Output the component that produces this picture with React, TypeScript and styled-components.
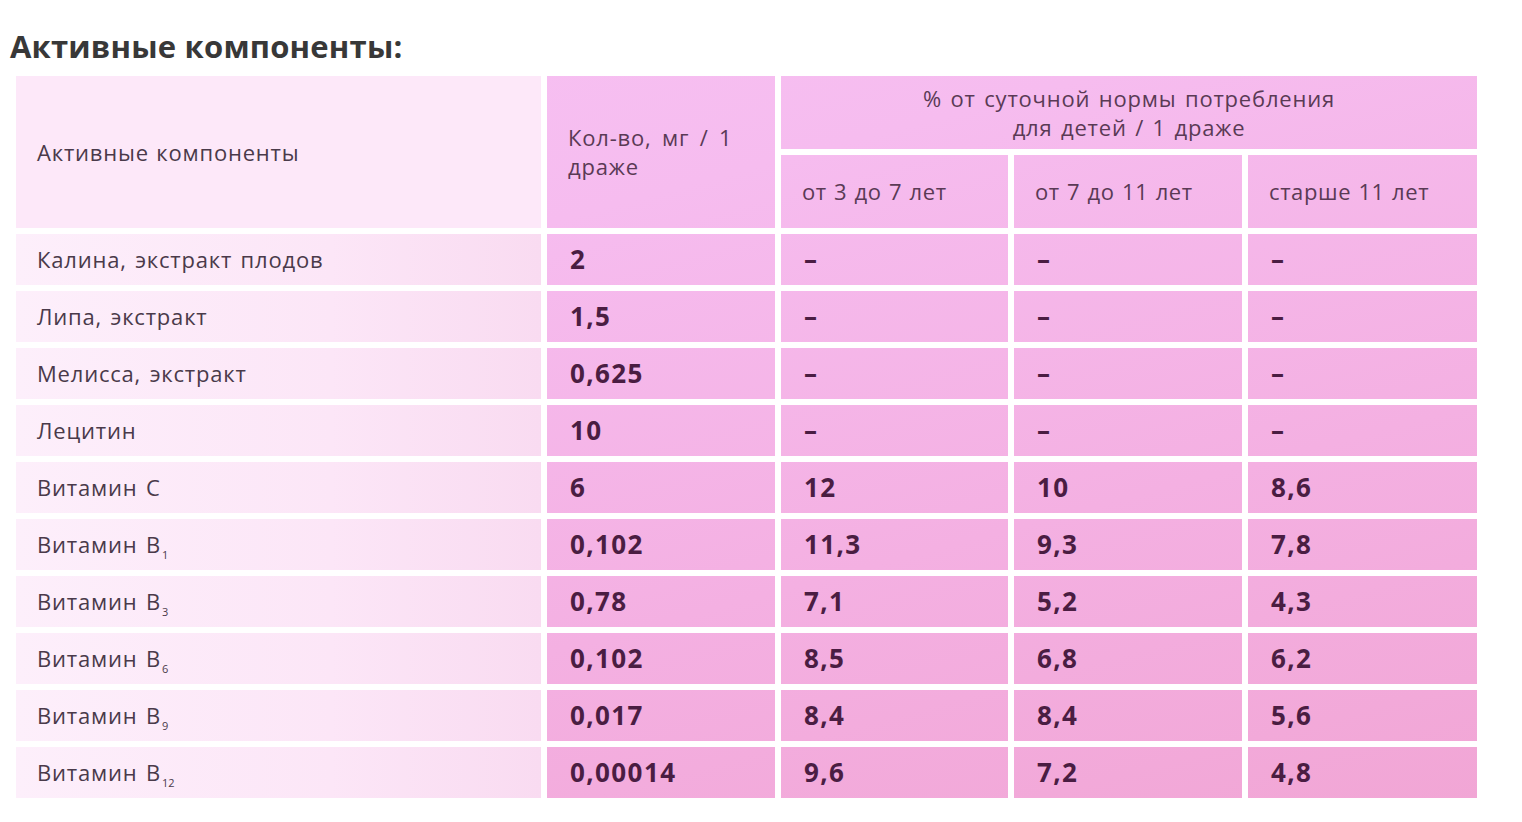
import React from 'react';
import styled, { createGlobalStyle } from 'styled-components';

type Row = {
  name: string;
  sub?: string;
  amount: string;
  values: [string, string, string];
};

const rows: Row[] = [
  { name: 'Калина, экстракт плодов', amount: '2', values: ['–', '–', '–'] },
  { name: 'Липа, экстракт', amount: '1,5', values: ['–', '–', '–'] },
  { name: 'Мелисса, экстракт', amount: '0,625', values: ['–', '–', '–'] },
  { name: 'Лецитин', amount: '10', values: ['–', '–', '–'] },
  { name: 'Витамин C', amount: '6', values: ['12', '10', '8,6'] },
  { name: 'Витамин B', sub: '1', amount: '0,102', values: ['11,3', '9,3', '7,8'] },
  { name: 'Витамин B', sub: '3', amount: '0,78', values: ['7,1', '5,2', '4,3'] },
  { name: 'Витамин B', sub: '6', amount: '0,102', values: ['8,5', '6,8', '6,2'] },
  { name: 'Витамин B', sub: '9', amount: '0,017', values: ['8,4', '8,4', '5,6'] },
  { name: 'Витамин B', sub: '12', amount: '0,00014', values: ['9,6', '7,2', '4,8'] },
];

const ages = ['от 3 до 7 лет', 'от 7 до 11 лет', 'старше 11 лет'];

const App = () => (
  <>
    <GlobalStyle />
    <Page>
      <Title>Активные компоненты:</Title>
      <Table>
        <LabelHead>Активные компоненты</LabelHead>
        <AmountHead>
          <span>Кол-во, мг / 1 драже</span>
        </AmountHead>
        <NormHead>
          <span>
            % от суточной нормы потребления
            <br />
            для детей / 1 драже
          </span>
        </NormHead>
        {ages.map((age) => (
          <AgeHead key={age}>{age}</AgeHead>
        ))}
        {rows.map((row) => (
          <React.Fragment key={row.name + (row.sub ?? '')}>
            <LabelCell>
              <span>
                {row.name}
                {row.sub && <Sub>{row.sub}</Sub>}
              </span>
            </LabelCell>
            <ValueCell>{row.amount}</ValueCell>
            {row.values.map((v, i) => (
              <ValueCell key={i}>{v}</ValueCell>
            ))}
          </React.Fragment>
        ))}
      </Table>
    </Page>
  </>
);

const GlobalStyle = createGlobalStyle`
  html, body {
    margin: 0;
    padding: 0;
    background: #fff;
  }

  body {
    font-family: 'Open Sans', 'Noto Sans', sans-serif;
    color: #4a3a48;
  }
`;

const Page = styled.div`
  width: 1522px;
  height: 822px;
  overflow: hidden;
  padding: 26px 0 0 10px;
  box-sizing: border-box;
`;

const Title = styled.h1`
  margin: 0 0 10px;
  font-size: 31px;
  font-weight: 700;
  line-height: 40px;
  letter-spacing: 0.2px;
  color: #383838;
`;

const Table = styled.div`
  display: grid;
  grid-template-columns: 525px 228px 227px 228px 229px;
  grid-template-rows: 73px 73px repeat(10, 51px);
  gap: 6px;
  margin-left: 6px;
`;

const dataBg = `
  background: linear-gradient(165deg, #f7c3f4 0%, #f6bcef 30%, #f4b0e2 65%, #f1a5d4 100%);
  background-attachment: fixed;
`;

const Cell = styled.div`
  display: flex;
  align-items: center;
  padding: 0 21px;
  font-size: 22px;
  font-weight: 400;
  line-height: 29px;
  letter-spacing: 0.8px;
  word-spacing: 1px;
`;

const LabelHead = styled(Cell)`
  grid-row: 1 / 3;
  background: #fde8f9;
  color: #4a3a4a;
`;

const AmountHead = styled(Cell)`
  grid-row: 1 / 3;
  ${dataBg}
  color: #5a3a55;
  word-spacing: 4px;
`;

const NormHead = styled(Cell)`
  grid-column: 3 / 6;
  justify-content: center;
  text-align: center;
  ${dataBg}
  color: #5a3a55;
  word-spacing: 2px;
`;

const AgeHead = styled(Cell)`
  ${dataBg}
  color: #5a3a55;
  letter-spacing: 0.6px;
`;

const LabelCell = styled(Cell)`
  background: linear-gradient(90deg, #fdeffb 0%, #fce6f7 60%, #f9dbf1 100%);
  color: #4a3a4a;
  word-spacing: 2px;
`;

const Sub = styled.sub`
  font-size: 11px;
  line-height: 0;
  letter-spacing: 0;
  margin-left: 1px;
  vertical-align: -6px;
`;

const ValueCell = styled(Cell)`
  ${dataBg}
  padding-left: 23px;
  font-size: 26px;
  font-weight: 700;
  letter-spacing: 1.4px;
  color: #4a1d42;
`;

export default App;
